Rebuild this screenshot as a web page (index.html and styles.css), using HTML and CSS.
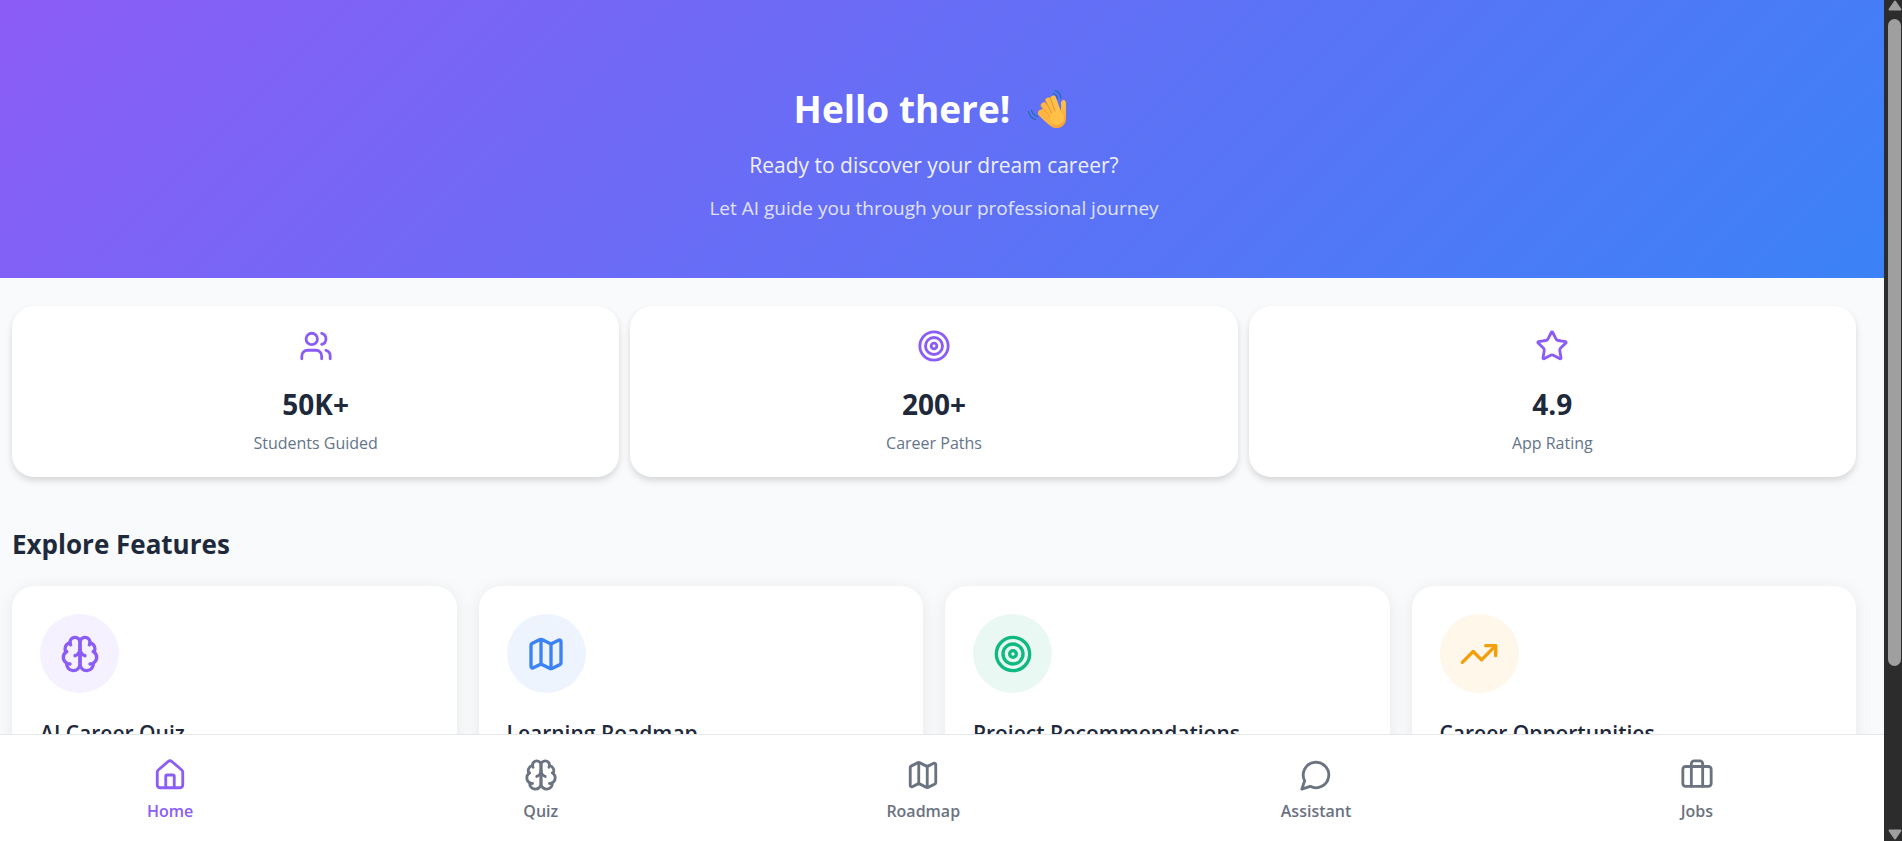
FILE: index.html
```html
<!DOCTYPE html>
<html lang="en">
<head>
<meta charset="utf-8">
<meta name="viewport" content="width=device-width, initial-scale=1">
<title>Career Guide</title>
<link rel="stylesheet" href="styles.css">
</head>
<body>
<svg class="sprite" aria-hidden="true">
  <symbol id="users" viewBox="0 0 24 24"><path d="M16 21v-2a4 4 0 0 0-4-4H6a4 4 0 0 0-4 4v2"/><circle cx="9" cy="7" r="4"/><path d="M22 21v-2a4 4 0 0 0-3-3.87"/><path d="M16 3.13a4 4 0 0 1 0 7.75"/></symbol>
  <symbol id="target" viewBox="0 0 24 24"><circle cx="12" cy="12" r="10"/><circle cx="12" cy="12" r="6"/><circle cx="12" cy="12" r="2"/></symbol>
  <symbol id="star" viewBox="0 0 24 24"><path d="M11.525 2.295a.53.53 0 0 1 .95 0l2.31 4.679a2.123 2.123 0 0 0 1.595 1.16l5.166.756a.53.53 0 0 1 .294.904l-3.736 3.638a2.123 2.123 0 0 0-.611 1.878l.882 5.14a.53.53 0 0 1-.771.56l-4.618-2.428a2.122 2.122 0 0 0-1.973 0L6.396 21.01a.53.53 0 0 1-.77-.56l.881-5.139a2.122 2.122 0 0 0-.611-1.879L2.16 9.795a.53.53 0 0 1 .294-.906l5.165-.755a2.122 2.122 0 0 0 1.597-1.16z"/></symbol>
  <symbol id="brain" viewBox="0 0 24 24"><path d="M12 5a3 3 0 1 0-5.997.125 4 4 0 0 0-2.526 5.77 4 4 0 0 0 .556 6.588A4 4 0 1 0 12 18Z"/><path d="M12 5a3 3 0 1 1 5.997.125 4 4 0 0 1 2.526 5.77 4 4 0 0 1-.556 6.588A4 4 0 1 1 12 18Z"/><path d="M15 13a4.5 4.5 0 0 1-3-4 4.5 4.5 0 0 1-3 4"/><path d="M17.599 6.5a3 3 0 0 0 .399-1.375"/><path d="M6.003 5.125A3 3 0 0 0 6.401 6.5"/><path d="M3.477 10.896a4 4 0 0 1 .585-.396"/><path d="M19.938 10.5a4 4 0 0 1 .585.396"/><path d="M6 18a4 4 0 0 1-1.967-.516"/><path d="M19.967 17.484A4 4 0 0 1 18 18"/></symbol>
  <symbol id="map" viewBox="0 0 24 24"><path d="M14.106 5.553a2 2 0 0 0 1.788 0l3.659-1.83A1 1 0 0 1 21 4.619v12.764a1 1 0 0 1-.553.894l-4.553 2.277a2 2 0 0 1-1.788 0l-4.212-2.106a2 2 0 0 0-1.788 0l-3.659 1.83A1 1 0 0 1 3 19.381V6.618a1 1 0 0 1 .553-.894l4.553-2.277a2 2 0 0 1 1.788 0z"/><path d="M15 5.764v15"/><path d="M9 3.236v15"/></symbol>
  <symbol id="trend" viewBox="0 0 24 24"><path d="m22 7-8.5 8.5-5-5L2 17"/><path d="M16 7h6v6"/></symbol>
  <symbol id="home" viewBox="0 0 24 24"><path d="M15 21v-8a1 1 0 0 0-1-1h-4a1 1 0 0 0-1 1v8"/><path d="M3 10a2 2 0 0 1 .709-1.528l7-5.999a2 2 0 0 1 2.582 0l7 5.999A2 2 0 0 1 21 10v9a2 2 0 0 1-2 2H5a2 2 0 0 1-2-2z"/></symbol>
  <symbol id="chat" viewBox="0 0 24 24"><path d="M7.9 20A9 9 0 1 0 4 16.1L2 22Z"/></symbol>
  <symbol id="jobs" viewBox="0 0 24 24"><path d="M16 20V4a2 2 0 0 0-2-2h-4a2 2 0 0 0-2 2v16"/><rect x="2" y="6" width="20" height="14" rx="2"/></symbol>
</svg>

<div class="screen">
  <main class="content">
    <header class="hero">
      <h1 class="hero-title">Hello there!
        <svg class="wave" viewBox="2 6 52 46" role="img" aria-label="waving hand">
          <defs><linearGradient id="skin" x1="0" y1="0" x2="0.7" y2="1"><stop offset="0" stop-color="#f9a93b"/><stop offset="0.5" stop-color="#ffc04a"/><stop offset="1" stop-color="#f6a534"/></linearGradient></defs>
          <g fill="none" stroke="#176fae" stroke-width="1.2" stroke-linecap="round"><path d="M33 13.500Q36.500 14 37.500 19"/><path d="M35 10.500Q40.500 12 41 18"/><path d="M11.500 30Q12.500 35 17.500 36.500"/><path d="M8.500 31.500Q9.500 37.500 15.500 39.500"/></g>
          <path fill="url(#skin)" d="M18 33 22 29 36 24 40 31.500Q41.500 29 41 23.500 41 20 43.500 20 46 20 46 24V38Q46 44 42 46.500 38 49 33 47.500 30 46.500 18.500 35Z"/>
          <g fill="none" stroke-linecap="round" stroke-width="5"><path stroke="#fdb442" d="m20.500 32.500 10 9"/><path stroke="#f6a136" d="m23 25.500 10 12"/><path stroke="#feb844" d="m24 25 10 12"/><path stroke="#ee9731" d="m27.500 20.500 7 14"/><path stroke="#ffbd49" d="m28.500 20 7 14"/><path stroke="#ee9731" d="m32.500 18.500 5 14"/><path stroke="#ffc04c" d="m33.500 18 5 14"/></g>
          <circle cx="37" cy="38" r="7" fill="#ffc04a"/>
        </svg></h1>
      <p class="hero-lead">Ready to discover your dream career?</p>
      <p class="hero-note">Let AI guide you through your professional journey</p>
    </header>

    <section class="stats" aria-label="Statistics">
      <div class="stat"><svg class="icon"><use href="#users"/></svg><strong class="stat-value">50K+</strong><span class="stat-label">Students Guided</span></div>
      <div class="stat"><svg class="icon"><use href="#target"/></svg><strong class="stat-value">200+</strong><span class="stat-label">Career Paths</span></div>
      <div class="stat"><svg class="icon"><use href="#star"/></svg><strong class="stat-value">4.9</strong><span class="stat-label">App Rating</span></div>
    </section>

    <section class="explore">
      <h2 class="section-title">Explore Features</h2>
      <div class="features">
        <a class="feature" href="#quiz"><span class="badge violet"><svg class="icon icon-large"><use href="#brain"/></svg></span><h3 class="feature-title">AI Career Quiz</h3></a>
        <a class="feature" href="#roadmap"><span class="badge blue"><svg class="icon icon-large"><use href="#map"/></svg></span><h3 class="feature-title">Learning Roadmap</h3></a>
        <a class="feature" href="#projects"><span class="badge green"><svg class="icon icon-large"><use href="#target"/></svg></span><h3 class="feature-title">Project Recommendations</h3></a>
        <a class="feature" href="#jobs-list"><span class="badge amber"><svg class="icon icon-large"><use href="#trend"/></svg></span><h3 class="feature-title">Career Opportunities</h3></a>
      </div>
    </section>
  </main>

  <nav class="tabs" aria-label="Main">
    <a class="tab active" href="#home-tab" aria-current="page"><svg class="icon"><use href="#home"/></svg><span>Home</span></a>
    <a class="tab" href="#quiz-tab"><svg class="icon"><use href="#brain"/></svg><span>Quiz</span></a>
    <a class="tab" href="#roadmap-tab"><svg class="icon"><use href="#map"/></svg><span>Roadmap</span></a>
    <a class="tab" href="#assistant-tab"><svg class="icon"><use href="#chat"/></svg><span>Assistant</span></a>
    <a class="tab" href="#jobs-tab"><svg class="icon"><use href="#jobs"/></svg><span>Jobs</span></a>
  </nav>
</div>

<div class="scrollbar" aria-hidden="true">
  <svg class="arrow" viewBox="0 0 14 11"><path d="M7 1.500 12.500 9.500H1.500Z"/></svg>
  <div class="track"><div class="thumb"></div></div>
  <svg class="arrow" viewBox="0 0 14 11"><path d="M7 9.500 12.500 1.500H1.500Z"/></svg>
</div>
</body>
</html>
```
FILE: styles.css
```css
* {
  box-sizing: border-box;
}

body {
  margin: 0;
  height: 100vh;
  display: flex;
  overflow: hidden;
  background: #f8fafc;
  color: #1e293b;
  font-family: "Segoe UI", "Open Sans", "Noto Sans", sans-serif;
}

h1, h2, h3, p {
  margin: 0;
}

a {
  color: inherit;
  text-decoration: none;
}

.sprite {
  position: absolute;
  width: 0;
  height: 0;
}

.icon {
  width: 34px;
  height: 34px;
  fill: none;
  stroke: currentColor;
  stroke-width: 2;
  stroke-linecap: round;
  stroke-linejoin: round;
}

.icon-large {
  width: 40px;
  height: 40px;
}

.screen {
  flex: 1;
  min-width: 0;
  display: flex;
  flex-direction: column;
}

.content {
  flex: 1;
  min-height: 0;
  overflow: hidden;
}

/* Hero */
.hero {
  padding: 83px 16px 54px 0;
  background: linear-gradient(135deg, #8b5cf6, #3b82f6);
  color: #fff;
  text-align: center;
}

.hero-title {
  display: flex;
  justify-content: center;
  align-items: center;
  gap: 12px;
  font-size: 37px;
  line-height: 52px;
  font-weight: 700;
}

.wave {
  width: 52px;
  height: 46px;
}

.hero-lead {
  margin-top: 14px;
  font-size: 21px;
  line-height: 32px;
  opacity: 0.9;
}

.hero-note {
  margin-top: 12px;
  font-size: 19px;
  line-height: 31px;
  opacity: 0.8;
}

/* Stats */
.stats {
  display: grid;
  grid-template-columns: repeat(3, 1fr);
  gap: 11px;
  padding: 28px 28px 0 12px;
}

.stat {
  display: flex;
  flex-direction: column;
  align-items: center;
  padding: 23px 22px 22px;
  border-radius: 22px;
  background: #fff;
  box-shadow: 0 4px 8px -1px rgba(0, 0, 0, 0.13), 0 3px 6px rgba(0, 0, 0, 0.04);
}

.stat .icon {
  color: #8b5cf6;
}

.stat-value {
  margin-top: 22px;
  font-size: 28px;
  line-height: 38px;
}

.stat-label {
  margin-top: 8px;
  font-size: 16px;
  line-height: 24px;
  color: #64748b;
}

/* Features */
.explore {
  padding: 48px 28px 0 12px;
}

.section-title {
  font-size: 26px;
  line-height: 38px;
}

.features {
  display: grid;
  grid-template-columns: repeat(4, 1fr);
  gap: 22px;
  margin-top: 23px;
}

.feature {
  padding: 28px;
  border-radius: 22px;
  background: #fff;
  box-shadow: 0 3px 17px rgba(0, 0, 0, 0.08);
}

.badge {
  display: flex;
  align-items: center;
  justify-content: center;
  width: 79px;
  height: 79px;
  border-radius: 50%;
}

.violet {
  color: #8b5cf6;
  background: #f5f1fe;
}

.blue {
  color: #3b82f6;
  background: #eef4fe;
}

.green {
  color: #10b981;
  background: #e9f8f3;
}

.amber {
  color: #f59e0b;
  background: #fef7ea;
}

.feature-title {
  margin-top: 23px;
  font-size: 21px;
  line-height: 34px;
  font-weight: 600;
}

/* Bottom navigation */
.tabs {
  display: flex;
  justify-content: space-between;
  height: 107px;
  padding: 23px 8.6% 0 7.7%;
  border-top: 1px solid #e5e7eb;
  background: #fff;
}

.tab {
  display: flex;
  flex-direction: column;
  align-items: center;
  min-width: 50px;
  gap: 8px;
  color: #6b7280;
  font-size: 16px;
  line-height: 22px;
  font-weight: 600;
}

.tab.active {
  color: #8b5cf6;
}

/* Scroll indicator */
.scrollbar {
  width: 18px;
  padding-left: 3px;
  display: flex;
  flex-direction: column;
  align-items: center;
  background: #2c2c2c;
}

.arrow {
  width: 14px;
  height: 11px;
  margin: 0 0 1px;
  fill: #9f9f9f;
  stroke: #9f9f9f;
  stroke-width: 2;
  stroke-linejoin: round;
}

.track {
  flex: 1;
  width: 13px;
  padding: 7px 0;
}

.thumb {
  height: 80.6%;
  border-radius: 7px;
  background: #9f9f9f;
}
```
